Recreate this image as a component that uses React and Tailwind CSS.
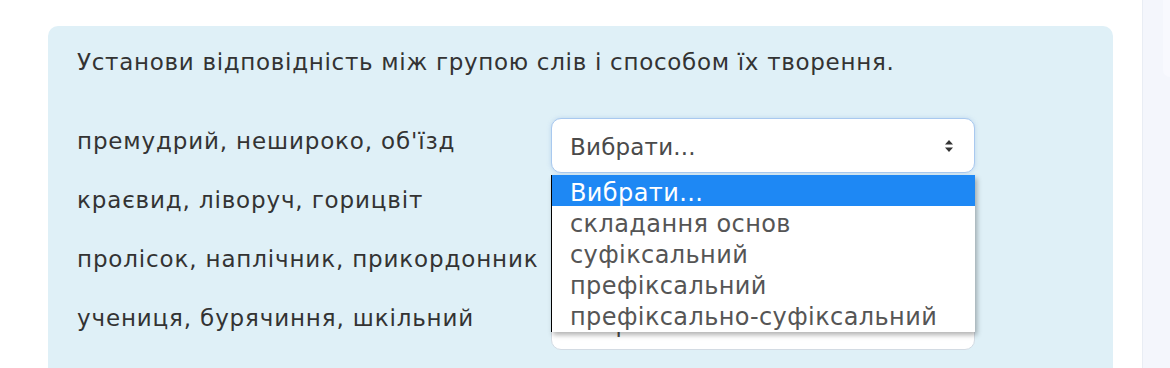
const rows = [
  "премудрий, нешироко, об'їзд",
  'краєвид, ліворуч, горицвіт',
  'пролісок, наплічник, прикордонник',
  'учениця, бурячиння, шкільний',
];

const options = [
  'Вибрати...',
  'складання основ',
  'суфіксальний',
  'префіксальний',
  'префіксально-суфіксальний',
];

const Arrows = () => (
  <svg width="10" height="14" viewBox="0 0 10 14" className="shrink-0">
    <path d="M5 1 L9 5.5 L1 5.5 Z" fill="#333" />
    <path d="M5 13 L9 8.5 L1 8.5 Z" fill="#333" />
  </svg>
);

function Select({ focused }) {
  return (
    <div
      className={
        focused
          ? 'flex items-center justify-between h-[55px] w-[424px] shrink-0 rounded-[10px] bg-white border border-[#a9c9ef] shadow-[0_0_4px_rgba(120,160,220,0.35)] pl-[18px] pr-[20px]'
          : 'flex items-center justify-between h-[55px] w-[424px] shrink-0 rounded-[10px] bg-white border border-[#d3dbe3] pl-[18px] pr-[20px]'
      }
    >
      <span className="text-[23px] tracking-[0.2px] leading-[30px] pt-[2px] text-[#4a4a4a]">Вибрати...</span>
      <Arrows />
    </div>
  );
}

export default function App() {
  return (
    <div
      className="w-[1170px] h-[368px] bg-white flex overflow-hidden"
      style={{ fontFamily: '"DejaVu Sans", sans-serif' }}
    >
      <div className="flex-1 pl-[48px] pr-[29px] pt-[26px]">
        <div className="relative h-full bg-[#dff0f7] rounded-t-[10px] pl-[29px] pt-[21px]">
          <p className="text-[23px] tracking-[0.7px] leading-[30px] text-[#333] whitespace-nowrap">
            Установи відповідність між групою слів і способом їх творення.
          </p>
          <div className="mt-[41px] flex flex-col gap-[4px]">
            {rows.map((r, i) => (
              <div key={i} className="flex">
                <div className="w-[474px] pt-[8px] text-[23px] tracking-[0.85px] leading-[30px] text-[#333] whitespace-nowrap">
                  {r}
                </div>
                <Select focused={i === 0} />
              </div>
            ))}
          </div>

          {/* open native dropdown */}
          <div className="absolute left-[503px] top-[149px] w-[424px] pb-[2px] bg-white border-l border-l-black shadow-[2px_3px_5px_rgba(0,0,0,0.3)]">
            {options.map((o, i) => (
              <div
                key={o}
                className={
                  i === 0
                    ? 'h-[31px] leading-[36px] pl-[18px] text-[24px] tracking-[0.4px] bg-[#1e88f4] text-white whitespace-nowrap'
                    : 'h-[31px] leading-[36px] pl-[18px] text-[24px] tracking-[0.4px] text-[#555] whitespace-nowrap'
                }
              >
                {o}
              </div>
            ))}
          </div>
        </div>
      </div>

      <div className="w-[28px] border-l border-[#e9edf4] bg-[#f4f6fc] flex flex-col items-end">
        <div className="w-[7px] h-[77px] bg-[#f8f9fe] rounded-bl-[8px]" />
      </div>
    </div>
  );
}
